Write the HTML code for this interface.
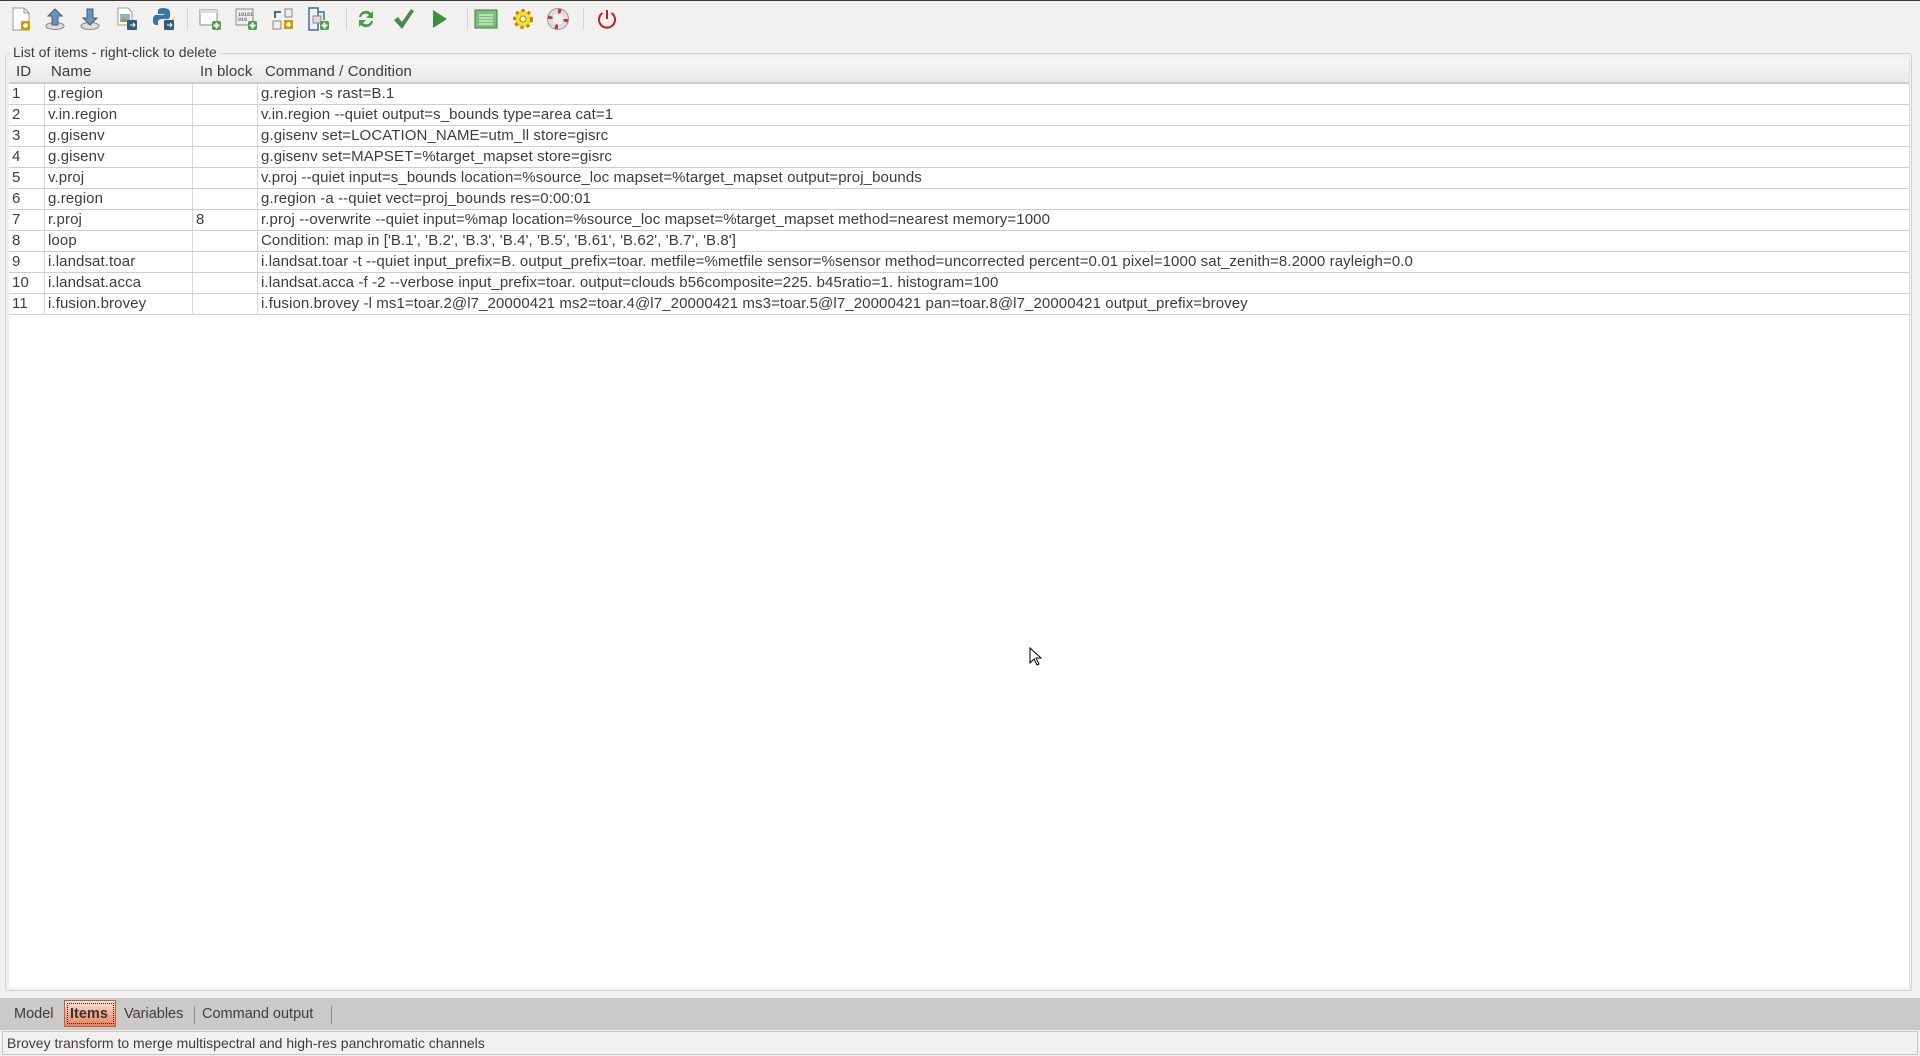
<!DOCTYPE html>
<html><head><meta charset="utf-8"><style>
*{margin:0;padding:0;box-sizing:border-box}
body{width:1920px;height:1056px;background:#f2f1f0;font-family:"Liberation Sans",sans-serif;color:#3c3c3c;position:relative;overflow:hidden;font-size:14px}
.topline{position:absolute;left:0;top:0;width:1920px;height:1px;background:#3c3b37}
.ic{position:absolute;top:7px;width:24px;height:24px}
.sep{position:absolute;top:8px;width:1px;height:22px;background:#d6d4d0}
.grp{position:absolute;left:5px;top:53px;width:1907px;height:938px;border:1px solid #d3d1cc;border-radius:3px}
.lbl{position:absolute;left:10px;top:44px;background:#f2f1f0;padding:0 3px;font-size:14px;color:#3c3c3c}
.tbl{position:absolute;left:9px;top:60px;width:1901px;height:928px;background:#fff;border-right:1px solid #e0dedb;font-size:15px;letter-spacing:0.1px}
.hdr{position:absolute;left:0;top:0;width:100%;height:24px;background:linear-gradient(#f6f5f4,#ebeae8);border-bottom:2px solid #cfcdca}
.hdr span{position:absolute;top:3px}
.row{position:absolute;left:0;width:100%;height:21px;border-bottom:1px solid #cfcdca}
.row span{position:absolute;top:1px;white-space:nowrap}
.vl{position:absolute;top:24px;width:1px;height:231px;background:#d8d6d3}
.tabs{position:absolute;left:0;top:998px;width:1920px;height:32px;background:#cbcac8}
.tab{position:absolute;top:8px;font-size:14.5px;color:#3c3c3c}
.status{position:absolute;left:2px;top:1031px;width:1916px;height:24px;border:1px solid #c9c7c4;background:#f2f1f0;font-size:14px;padding:3px 4px}
</style></head><body>
<div class="topline"></div>
<svg class="ic" style="left:9px" viewBox="0 0 24 24"><path d="M4 1h11l5 5v17H4z" fill="#fff" stroke="#999"/><path d="M15 1v5h5" fill="none" stroke="#999"/><rect x="12" y="14" width="9" height="9" fill="#c9a000"/><circle cx="16.5" cy="18.5" r="2.3" fill="#fff"/></svg>
<svg class="ic" style="left:43px" viewBox="0 0 24 24"><ellipse cx="12" cy="19" rx="9" ry="3.5" fill="#ddd" stroke="#888"/><path d="M12 2l7 7h-4v9h-6V9H5z" fill="#6f93b4" stroke="#3e5f80"/></svg>
<svg class="ic" style="left:78px" viewBox="0 0 24 24"><ellipse cx="12" cy="19" rx="9" ry="3.5" fill="#ddd" stroke="#888"/><path d="M12 18l7-7h-4V2H9v9H5z" fill="#6f93b4" stroke="#3e5f80"/></svg>
<svg class="ic" style="left:115px" viewBox="0 0 24 24"><path d="M3 1h10l4 4v13H3z" fill="#fff" stroke="#999"/><rect x="5" y="7" width="10" height="8" fill="#8fb4d6"/><path d="M5 15l4-5 6 5z" fill="#a89a3a"/><rect x="12" y="13" width="10" height="10" rx="1" fill="#335a78"/><path d="M15 18h5M18 16l2 2-2 2" stroke="#fff" fill="none"/></svg>
<svg class="ic" style="left:152px" viewBox="0 0 24 24"><path d="M11 1c-5 0-5 2-5 4v2h6v1H4c-3 0-3 4-3 5s0 5 3 5h2v-3c0-2 2-3 4-3h5c2 0 3-1 3-3V5c0-2-2-4-7-4z" fill="#3a74a8"/><path d="M12 22c5 0 5-2 5-4v-2h-6v-1h8c2 0 3-3 3-5" fill="#f5c93a"/><rect x="12" y="13" width="10" height="10" rx="1" fill="#335a78"/><path d="M15 18h5M18 16l2 2-2 2" stroke="#fff" fill="none"/></svg>
<div class="sep" style="left:187px"></div>
<svg class="ic" style="left:198px" viewBox="0 0 24 24"><rect x="2" y="3" width="17" height="15" fill="#fff" stroke="#888"/><rect x="2" y="3" width="17" height="3" fill="#cfe0f0"/><rect x="14" y="14" width="9" height="9" rx="2" fill="#4e9a4e"/><path d="M18.5 15.5v6M15.5 18.5h6" stroke="#fff" stroke-width="2"/></svg>
<svg class="ic" style="left:234px" viewBox="0 0 24 24"><rect x="2" y="2" width="17" height="16" fill="#eee" stroke="#888"/><text x="4" y="9" font-size="5" font-family="Liberation Mono" fill="#333">10101</text><text x="4" y="14" font-size="5" font-family="Liberation Mono" fill="#333">010</text><rect x="14" y="14" width="9" height="9" rx="2" fill="#4e9a4e"/><path d="M18.5 15.5v6M15.5 18.5h6" stroke="#fff" stroke-width="2"/></svg>
<svg class="ic" style="left:271px" viewBox="0 0 24 24"><rect x="14" y="2" width="7" height="8" fill="#eee" stroke="#888"/><rect x="2" y="14" width="8" height="8" fill="#eee" stroke="#888"/><path d="M4 11V5h6" stroke="#3e6f9a" stroke-width="2" fill="none"/><rect x="13" y="13" width="9" height="9" fill="#c9a000"/><circle cx="17.5" cy="17.5" r="2.2" fill="#fff"/></svg>
<svg class="ic" style="left:306px" viewBox="0 0 24 24"><path d="M3 1h9v22H3zM12 5h6v8" fill="none" stroke="#3e6f9a" stroke-width="1.5"/><rect x="7" y="9" width="8" height="7" fill="#ddd" stroke="#888"/><rect x="14" y="14" width="9" height="9" rx="2" fill="#4e9a4e"/><path d="M18.5 15.5v6M15.5 18.5h6" stroke="#fff" stroke-width="2"/></svg>
<div class="sep" style="left:346px"></div>
<svg class="ic" style="left:354px" viewBox="0 0 24 24"><path d="M5 10a7 7 0 0 1 12-4l2-2v7h-7l3-3a5 5 0 0 0-8 2z" fill="#4e9a4e"/><path d="M19 14a7 7 0 0 1-12 4l-2 2v-7h7l-3 3a5 5 0 0 0 8-2z" fill="#4e9a4e"/></svg>
<svg class="ic" style="left:391px" viewBox="0 0 24 24"><path d="M3 13l4-3 4 5 9-13 3 2-12 18z" fill="#4a8a4a"/></svg>
<svg class="ic" style="left:427px" viewBox="0 0 24 24"><path d="M6 3l14 9-14 9z" fill="#3f8f3f"/></svg>
<div class="sep" style="left:467px"></div>
<svg class="ic" style="left:474px" viewBox="0 0 24 24"><rect x="1" y="3" width="22" height="18" fill="#7bbf7b" stroke="#3f7f3f"/><path d="M5 8h14M5 11h14M5 14h14M5 17h14" stroke="#fff"/></svg>
<svg class="ic" style="left:511px" viewBox="0 0 24 24"><circle cx="12" cy="12" r="8" fill="#f0d020" stroke="#b09000" stroke-width="4" stroke-dasharray="3 3"/><circle cx="12" cy="12" r="7" fill="#f5dc30"/><circle cx="12" cy="12" r="3" fill="#fff" stroke="#b09000"/></svg>
<svg class="ic" style="left:546px" viewBox="0 0 24 24"><circle cx="12" cy="12" r="8" fill="none" stroke="#ddd" stroke-width="5"/><circle cx="12" cy="12" r="8" fill="none" stroke="#c33" stroke-width="5" stroke-dasharray="3 9.5"/><circle cx="12" cy="12" r="10.5" fill="none" stroke="#999"/></svg>
<div class="sep" style="left:583px"></div>
<svg class="ic" style="left:595px" viewBox="0 0 24 24"><path d="M7.5 6a8 8 0 1 0 9 0" fill="none" stroke="#b22" stroke-width="2"/><path d="M12 3v9" stroke="#b22" stroke-width="2"/></svg>

<div class="grp"></div>
<div class="lbl">List of items - right-click to delete</div>
<div class="tbl">
<div class="hdr"><span style="left:7px">ID</span><span style="left:42px">Name</span><span style="left:191px">In block</span><span style="left:256px">Command / Condition</span></div>
<div class="vl" style="left:35px"></div><div class="vl" style="left:183px"></div><div class="vl" style="left:248px"></div>
<div class="row" style="top:24px"><span style="left:3px">1</span><span style="left:39px">g.region</span><span style="left:252px">g.region -s rast=B.1</span></div>
<div class="row" style="top:45px"><span style="left:3px">2</span><span style="left:39px">v.in.region</span><span style="left:252px">v.in.region --quiet output=s_bounds type=area cat=1</span></div>
<div class="row" style="top:66px"><span style="left:3px">3</span><span style="left:39px">g.gisenv</span><span style="left:252px">g.gisenv set=LOCATION_NAME=utm_ll store=gisrc</span></div>
<div class="row" style="top:87px"><span style="left:3px">4</span><span style="left:39px">g.gisenv</span><span style="left:252px">g.gisenv set=MAPSET=%target_mapset store=gisrc</span></div>
<div class="row" style="top:108px"><span style="left:3px">5</span><span style="left:39px">v.proj</span><span style="left:252px">v.proj --quiet input=s_bounds location=%source_loc mapset=%target_mapset output=proj_bounds</span></div>
<div class="row" style="top:129px"><span style="left:3px">6</span><span style="left:39px">g.region</span><span style="left:252px">g.region -a --quiet vect=proj_bounds res=0:00:01</span></div>
<div class="row" style="top:150px"><span style="left:3px">7</span><span style="left:39px">r.proj</span><span style="left:187px">8</span><span style="left:252px">r.proj --overwrite --quiet input=%map location=%source_loc mapset=%target_mapset method=nearest memory=1000</span></div>
<div class="row" style="top:171px"><span style="left:3px">8</span><span style="left:39px">loop</span><span style="left:252px">Condition: map in ['B.1', 'B.2', 'B.3', 'B.4', 'B.5', 'B.61', 'B.62', 'B.7', 'B.8']</span></div>
<div class="row" style="top:192px"><span style="left:3px">9</span><span style="left:39px">i.landsat.toar</span><span style="left:252px">i.landsat.toar -t --quiet input_prefix=B. output_prefix=toar. metfile=%metfile sensor=%sensor method=uncorrected percent=0.01 pixel=1000 sat_zenith=8.2000 rayleigh=0.0</span></div>
<div class="row" style="top:213px"><span style="left:3px">10</span><span style="left:39px">i.landsat.acca</span><span style="left:252px">i.landsat.acca -f -2 --verbose input_prefix=toar. output=clouds b56composite=225. b45ratio=1. histogram=100</span></div>
<div class="row" style="top:234px"><span style="left:3px">11</span><span style="left:39px">i.fusion.brovey</span><span style="left:252px">i.fusion.brovey -l ms1=toar.2@l7_20000421 ms2=toar.4@l7_20000421 ms3=toar.5@l7_20000421 pan=toar.8@l7_20000421 output_prefix=brovey</span></div>
</div>

<svg style="position:absolute;left:1029px;top:647px" width="14" height="20" viewBox="0 0 14 20"><path d="M1 1v15l4-4 3 6 2-1-3-6h5z" fill="#fff" stroke="#000"/></svg>

<div class="tabs">
<span class="tab" style="left:14px">Model</span>
<div style="position:absolute;left:64px;top:2px;width:52px;height:27px;background:linear-gradient(#fbe3d8,#ee7f55);border:1px solid #b46446"></div>
<div style="position:absolute;left:67px;top:5px;width:47px;height:21px;border:1px dotted #222"></div>
<span class="tab" style="left:70px;font-weight:bold;color:#333">Items</span>
<span class="tab" style="left:124px">Variables</span>
<div style="position:absolute;left:194px;top:8px;width:1px;height:18px;background:#888"></div>
<span class="tab" style="left:202px">Command output</span>
<div style="position:absolute;left:331px;top:8px;width:1px;height:18px;background:#888"></div>
</div>
<div class="status">Brovey transform to merge multispectral and high-res panchromatic channels</div>
</body></html>
